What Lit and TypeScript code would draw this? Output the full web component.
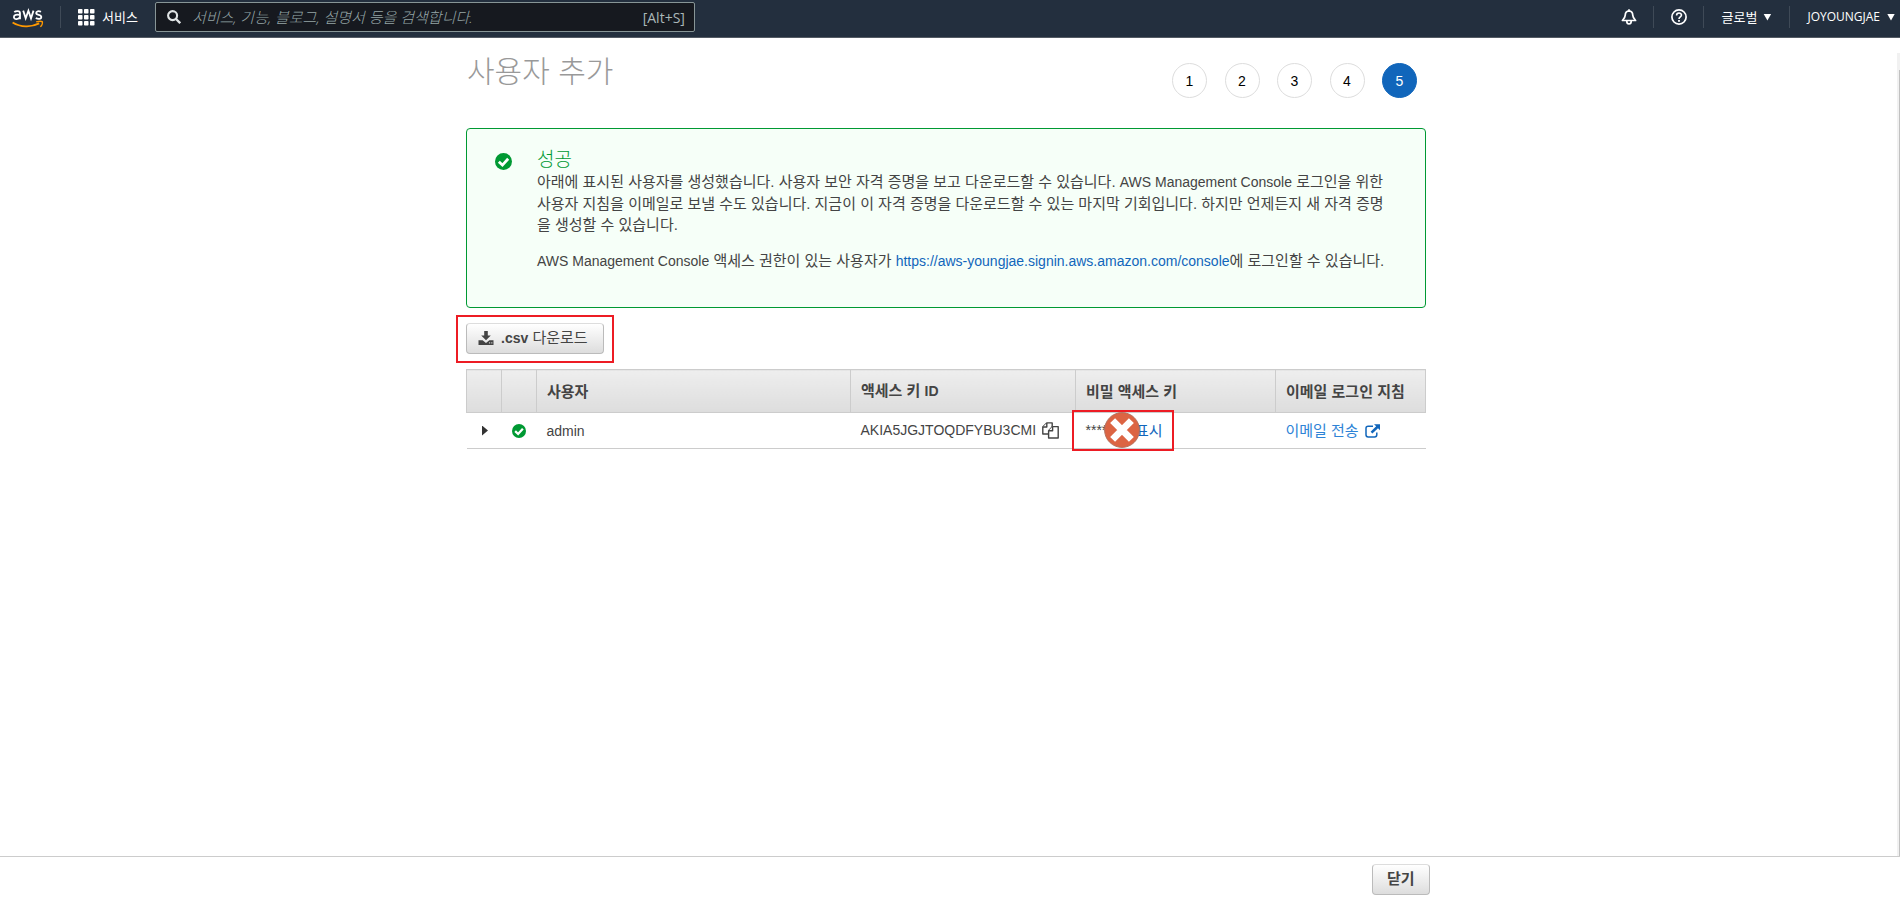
import { LitElement, html, css, svg } from "lit";
import { customElement } from "lit/decorators.js";

const FONT = css`"Liberation Sans", "Noto Sans CJK KR", sans-serif`;
const NAV_FONT = css`"Open Sans", "Noto Sans CJK KR", sans-serif`;

const checkIcon = (cls: string) => html`
  <svg class=${cls} viewBox="0 0 16 16" aria-hidden="true">
    <circle cx="8" cy="8" r="8" fill="#093" />
    <path d="M3.6 8.2 L7 11.4 L12.4 5.4" fill="none" stroke="#fff" stroke-width="2.6" />
  </svg>
`;

@customElement("console-header")
export class ConsoleHeader extends LitElement {
  static styles = css`
    :host {
      display: block;
      font-family: ${NAV_FONT};
      color: #fff;
    }
    .bar {
      display: flex;
      align-items: center;
      padding: 2px 5px 5px 12px;
      background: #232f3e;
      border-bottom: 1px solid #545b64;
    }
    .logo {
      display: block;
      width: 32px;
      height: 23px;
    }
    .divider {
      width: 1px;
      height: 22px;
      background: #3f4a57;
    }
    .gap-logo {
      margin: 0 17px 0 16px;
    }
    .item {
      display: flex;
      align-items: center;
      margin: 0;
      padding: 0;
      border: 0;
      background: none;
      color: inherit;
      font: 13px/20px ${NAV_FONT};
      white-space: nowrap;
      cursor: pointer;
    }
    .services {
      gap: 7px;
    }
    .grid {
      display: block;
      width: 17px;
      height: 17px;
    }
    .search {
      display: flex;
      align-items: center;
      box-sizing: border-box;
      width: 540px;
      height: 30px;
      margin-left: 17px;
      padding: 0 9px 0 11px;
      border: 1px solid #879596;
      border-radius: 2px;
      background: #16191f;
      color: #aab7b8;
      font-size: 14px;
    }
    .magnifier {
      flex: none;
      width: 14px;
      height: 14px;
    }
    .field {
      flex: 1;
      min-width: 0;
      margin-left: 11px;
      padding: 0;
      border: 0;
      outline: 0;
      background: none;
      color: #fff;
      font: 15px/20px ${NAV_FONT};
    }
    .field::placeholder {
      color: #95a5a6;
      font-style: italic;
      font-weight: 300;
      opacity: 1;
    }
    .right {
      display: flex;
      align-items: center;
      margin-left: auto;
    }
    .icon {
      display: block;
      width: 16px;
      height: 16px;
    }
    .padded {
      padding: 0 16px 0 17px;
    }
    .region {
      gap: 6px;
      padding: 0 18px;
    }
    .account {
      gap: 7px;
      padding-left: 17px;
      font-size: 12px;
    }
    .caret {
      width: 8px;
      height: 7px;
      background: #fff;
      clip-path: polygon(0 0, 100% 0, 50% 100%);
    }
  `;

  render() {
    const dots = [0, 6, 12];
    return html`
      <header class="bar">
        <svg class="logo" viewBox="0 0 32 23" role="img" aria-label="AWS">
          <g fill="none" stroke="#fff" stroke-width="1.8">
            <path d="M2.3 6.2 C3.6 4.9 8 4.4 8 7.3 V13.2 M8 8.9 C4.8 8.2 1.9 8.7 1.9 11 C1.9 14 6.8 13.5 8 10.8" />
            <path d="M11.2 4.6 L13.7 12.3 L16.4 4.8 L19 12.3 L21.5 4.6" />
            <path d="M29 5.8 C26.6 4.7 24.2 5.2 24.2 7 C24.2 9.6 29.3 8.2 29.3 11 C29.3 13.4 25.8 13.2 23.8 12" />
          </g>
          <path d="M0.6 16.4 C8.5 21.2 19 21.6 27.2 17.4" fill="none" stroke="#f90" stroke-width="1.8" />
          <path d="M24.2 15.9 C26.6 15.2 29.2 15 30.2 15.6 C30.8 16.8 29.9 19.4 28.3 20.8" fill="none" stroke="#f90" stroke-width="1.5" />
        </svg>
        <span class="divider gap-logo"></span>
        <button class="item services">
          <svg class="grid" viewBox="0 0 17 17" aria-hidden="true">
            ${dots.map((y) => dots.map((x) => svg`<rect x=${x} y=${y} width="4.5" height="4.5" rx="0.8" fill="#fff" />`))}
          </svg>
          서비스
        </button>
        <label class="search">
          <svg class="magnifier" viewBox="0 0 14 14" aria-hidden="true">
            <circle cx="5.6" cy="5.6" r="4.5" fill="none" stroke="#e0e4e5" stroke-width="2.1" />
            <path d="M9 9 L13.2 13.2" stroke="#e0e4e5" stroke-width="2.3" />
          </svg>
          <input class="field" type="search" aria-label="검색" placeholder="서비스, 기능, 블로그, 설명서 등을 검색합니다." />
          <span>[Alt+S]</span>
        </label>
        <nav class="right">
          <button class="item padded" aria-label="알림">
            <svg class="icon" viewBox="0 0 16 16" aria-hidden="true">
              <path d="M8 0.2 V2 M8 1.9 C5.2 2 4.3 4.2 4.2 6.4 C4.1 8.6 3 10 1.4 11.5 H14.6 C13 10 11.9 8.6 11.8 6.4 C11.7 4.2 10.8 2 8 1.9 Z M5.8 12.2 C5.8 15.8 10.2 15.8 10.2 12.2" fill="none" stroke="#fff" stroke-width="1.7" stroke-linejoin="round" />
            </svg>
          </button>
          <span class="divider"></span>
          <button class="item padded" aria-label="도움말">
            <svg class="icon" viewBox="0 0 16 16" aria-hidden="true">
              <circle cx="8" cy="8" r="7.1" fill="none" stroke="#fff" stroke-width="1.7" />
              <path d="M5.6 6.4 C5.6 3.2 10.5 3.3 10.5 6.1 C10.5 7.9 8 7.8 8 10" fill="none" stroke="#fff" stroke-width="1.6" />
              <rect x="7.1" y="11" width="1.8" height="1.8" fill="#fff" />
            </svg>
          </button>
          <span class="divider"></span>
          <button class="item region">글로벌 <span class="caret"></span></button>
          <span class="divider"></span>
          <button class="item account">JOYOUNGJAE <span class="caret"></span></button>
        </nav>
      </header>
    `;
  }
}

@customElement("wizard-steps")
export class WizardSteps extends LitElement {
  static styles = css`
    .steps {
      display: flex;
      justify-content: space-between;
      width: 245px;
      margin: 0;
      padding: 0;
      list-style: none;
    }
    .step {
      display: flex;
      align-items: center;
      justify-content: center;
      box-sizing: border-box;
      width: 35px;
      height: 35px;
      border: 1px solid #ddd;
      border-radius: 50%;
      color: #000;
      font: 14px/20px ${FONT};
    }
    .current {
      border-color: #1166bb;
      background: #1166bb;
      color: #fff;
    }
  `;

  render() {
    return html`
      <ol class="steps">
        ${[1, 2, 3, 4, 5].map((n) => html`<li class="step ${n === 5 ? "current" : ""}">${n}</li>`)}
      </ol>
    `;
  }
}

@customElement("app-root")
export class AppRoot extends LitElement {
  static styles = css`
    :host {
      display: flex;
      flex-direction: column;
      min-height: 100vh;
      background: #fff;
      color: #444;
      font: 15px/21px ${FONT};
    }
    .latin {
      font-size: 14px;
    }
    a {
      color: #1166bb;
      text-decoration: none;
    }
    .body {
      display: flex;
      flex: 1;
    }
    .content {
      flex: 1;
      min-width: 0;
      padding: 14px 5px 0 0;
    }
    .column {
      width: 960px;
      max-width: 100%;
      margin: 0 auto;
    }
    .scrollbar {
      box-sizing: border-box;
      width: 3px;
      margin-top: 15px;
      padding: 17px 0 0 2px;
      background: #f1f1f1;
    }
    .thumb {
      height: 100%;
      background: #c1c1c1;
    }
    .heading {
      display: flex;
      justify-content: space-between;
      align-items: flex-start;
      height: 76px;
      padding: 0 9px 0 1px;
    }
    .title {
      margin: 0;
      color: #999;
      font-size: 30px;
      line-height: 40px;
      font-weight: 300;
    }
    .steps {
      margin-top: 11px;
    }
    .alert {
      display: grid;
      grid-template-columns: 18px 1fr;
      gap: 24px;
      padding: 20px 34px 27px 28px;
      border: 1px solid #093;
      border-radius: 4px;
      background: #f6fff8;
    }
    .alert-icon {
      width: 17px;
      height: 17px;
      margin-top: 4px;
    }
    .alert-title {
      margin: 0;
      color: #093;
      font-size: 19px;
      line-height: 22px;
      font-weight: 300;
    }
    .text {
      margin: 0 0 15px;
    }
    .last {
      margin: 0 0 8px;
    }
    .toolbar {
      padding: 15px 0;
    }
    .marked {
      position: relative;
      display: inline-block;
      vertical-align: top;
    }
    .outline {
      position: absolute;
      box-sizing: border-box;
      border: 2px solid #ed1c24;
      pointer-events: none;
    }
    .outline-button {
      inset: -8px -10px -9px;
    }
    .button {
      display: flex;
      align-items: center;
      justify-content: center;
      box-sizing: border-box;
      height: 31px;
      padding: 0 14px;
      border: 1px solid #bbb;
      border-top-color: #ddd;
      border-radius: 4px;
      background: linear-gradient(#fff, #ddd);
      color: #444;
      font: 15px/21px ${FONT};
      white-space: nowrap;
      cursor: pointer;
    }
    .download {
      gap: 7px;
      padding: 0 15px 2px 11px;
    }
    .download-icon {
      width: 16px;
      height: 14px;
    }
    .csv {
      font-size: 14px;
      font-weight: 700;
    }
    .table {
      width: 100%;
      border-collapse: collapse;
      table-layout: fixed;
    }
    .head th {
      box-sizing: border-box;
      height: 43px;
      padding: 0 10px;
      border: 1px solid #ccc;
      background: linear-gradient(#eee, #ddd);
      font-weight: 700;
      text-align: left;
      white-space: nowrap;
    }
    .row td {
      box-sizing: border-box;
      height: 36px;
      padding: 0 10px;
      border-bottom: 1px solid #ccc;
      white-space: nowrap;
    }
    .col-icon {
      width: 35px;
    }
    .col-key {
      width: 225px;
    }
    .col-secret {
      width: 200px;
    }
    .col-mail {
      width: 150px;
    }
    .row .center {
      padding: 0;
      text-align: center;
    }
    .plain {
      display: block;
      margin: 0 auto;
      padding: 0;
      border: 0;
      background: none;
      cursor: pointer;
    }
    .expand {
      display: block;
      width: 6px;
      height: 10px;
      margin-left: 2px;
      background: #333;
      clip-path: polygon(0 0, 100% 50%, 0 100%);
    }
    .ok {
      display: block;
      width: 14px;
      height: 14px;
      margin: 0 auto;
    }
    .key {
      display: flex;
      align-items: center;
      gap: 6px;
    }
    .copy-icon {
      display: block;
      width: 17px;
      height: 17px;
    }
    .secret {
      position: relative;
      display: flex;
      align-items: center;
      width: 77px;
    }
    .secret-link {
      margin-left: auto;
    }
    .outline-secret {
      inset: -10px -11px -10px -14px;
    }
    .cross {
      position: absolute;
      top: -8px;
      left: 18px;
      width: 36px;
      height: 36px;
    }
    .mail {
      display: flex;
      align-items: center;
      gap: 6px;
      color: #2e83d6;
    }
    .mail-icon {
      width: 15px;
      height: 14px;
    }
    .footer {
      padding: 7px 5px 5px 0;
      border-top: 1px solid #ccc;
    }
    .actions {
      display: flex;
      justify-content: flex-end;
      box-sizing: border-box;
      width: 964px;
      max-width: 100%;
      margin: 0 auto;
    }
    .strong {
      padding-bottom: 2px;
      font-weight: 700;
    }
  `;

  render() {
    return html`
      <console-header></console-header>
      <div class="body">
        <main class="content">
          <div class="column">
            <div class="heading">
              <h1 class="title">사용자 추가</h1>
              <wizard-steps class="steps"></wizard-steps>
            </div>

            <section class="alert">
              ${checkIcon("alert-icon")}
              <div>
                <h2 class="alert-title">성공</h2>
                <p class="text">
                  아래에 표시된 사용자를 생성했습니다. 사용자 보안 자격 증명을 보고 다운로드할 수 있습니다.
                  <span class="latin">AWS Management Console</span> 로그인을 위한 사용자 지침을 이메일로 보낼 수도
                  있습니다. 지금이 이 자격 증명을 다운로드할 수 있는 마지막 기회입니다. 하지만 언제든지 새 자격 증명을
                  생성할 수 있습니다.
                </p>
                <p class="text last">
                  <span class="latin">AWS Management Console</span> 액세스 권한이 있는 사용자가
                  <a class="latin" href="#console">https://aws-youngjae.signin.aws.amazon.com/console</a>에 로그인할 수 있습니다.
                </p>
              </div>
            </section>

            <div class="toolbar">
              <div class="marked">
                <button class="button download">
                  <svg class="download-icon" viewBox="0 0 16 14" aria-hidden="true">
                    <path d="M6.2 0 H9.8 V4.4 H12.8 L8 9.2 L3.2 4.4 H6.2 Z" fill="#444" />
                    <path d="M0.5 9.2 H4.6 L8 12 L11.4 9.2 H15.5 V14 H0.5 Z" fill="#444" />
                    <path d="M11 11.9 H12.2 M13.2 11.9 H14.4" stroke="#e5e5e5" stroke-width="1" />
                  </svg>
                  <span><span class="csv">.csv</span> 다운로드</span>
                </button>
                <span class="outline outline-button"></span>
              </div>
            </div>

            <table class="table">
              <colgroup>
                <col class="col-icon" />
                <col class="col-icon" />
                <col />
                <col class="col-key" />
                <col class="col-secret" />
                <col class="col-mail" />
              </colgroup>
              <thead>
                <tr class="head">
                  <th></th>
                  <th></th>
                  <th>사용자</th>
                  <th>액세스 키 <span class="latin">ID</span></th>
                  <th>비밀 액세스 키</th>
                  <th>이메일 로그인 지침</th>
                </tr>
              </thead>
              <tbody>
                <tr class="row">
                  <td class="center">
                    <button class="plain" aria-label="펼치기"><span class="expand"></span></button>
                  </td>
                  <td class="center">${checkIcon("ok")}</td>
                  <td><span class="latin">admin</span></td>
                  <td>
                    <div class="key">
                      <span class="latin">AKIA5JGJTOQDFYBU3CMI</span>
                      <svg class="copy-icon" viewBox="0 0 17 17" aria-hidden="true">
                        <g fill="#fff" stroke="#444" stroke-width="1.4" stroke-linejoin="round">
                          <path d="M4.8 0.9 H10.2 V12 H0.8 V5 Z" />
                          <path d="M4.8 0.9 V5 H0.8" />
                          <path d="M10.6 4.6 H16.2 V16 H6.6 V8.8 Z" />
                          <path d="M10.6 4.6 V8.8 H6.6" />
                        </g>
                      </svg>
                    </div>
                  </td>
                  <td>
                    <div class="secret">
                      <span class="latin">*********</span>
                      <a class="secret-link" href="#show">표시</a>
                      <svg class="cross" viewBox="0 0 36 36" aria-hidden="true">
                        <circle cx="18" cy="18" r="17.4" fill="#dc6443" stroke="#b3705c" stroke-width="1" />
                        <path d="M8.6 8.6 L27.4 27.4 M27.4 8.6 L8.6 27.4" stroke="#fff" stroke-width="7" />
                      </svg>
                      <span class="outline outline-secret"></span>
                    </div>
                  </td>
                  <td>
                    <a class="mail" href="#mail">
                      이메일 전송
                      <svg class="mail-icon" viewBox="0 0 15 14" aria-hidden="true">
                        <path d="M8 2.3 H3.2 C1.8 2.3 1 3 1 4.4 V10.8 C1 12.2 1.8 13 3.2 13 H9.6 C11 13 11.8 12.2 11.8 10.8 V8.6" fill="none" stroke="#1166bb" stroke-width="1.5" />
                        <path d="M9 0.2 H15 V6.2 L13 4.3 L7.4 9.6 L5.6 7.8 L11.2 2.2 Z" fill="#1166bb" />
                      </svg>
                    </a>
                  </td>
                </tr>
              </tbody>
            </table>
          </div>
        </main>
        <div class="scrollbar"><div class="thumb"></div></div>
      </div>
      <footer class="footer">
        <div class="actions">
          <button class="button strong">닫기</button>
        </div>
      </footer>
    `;
  }
}
